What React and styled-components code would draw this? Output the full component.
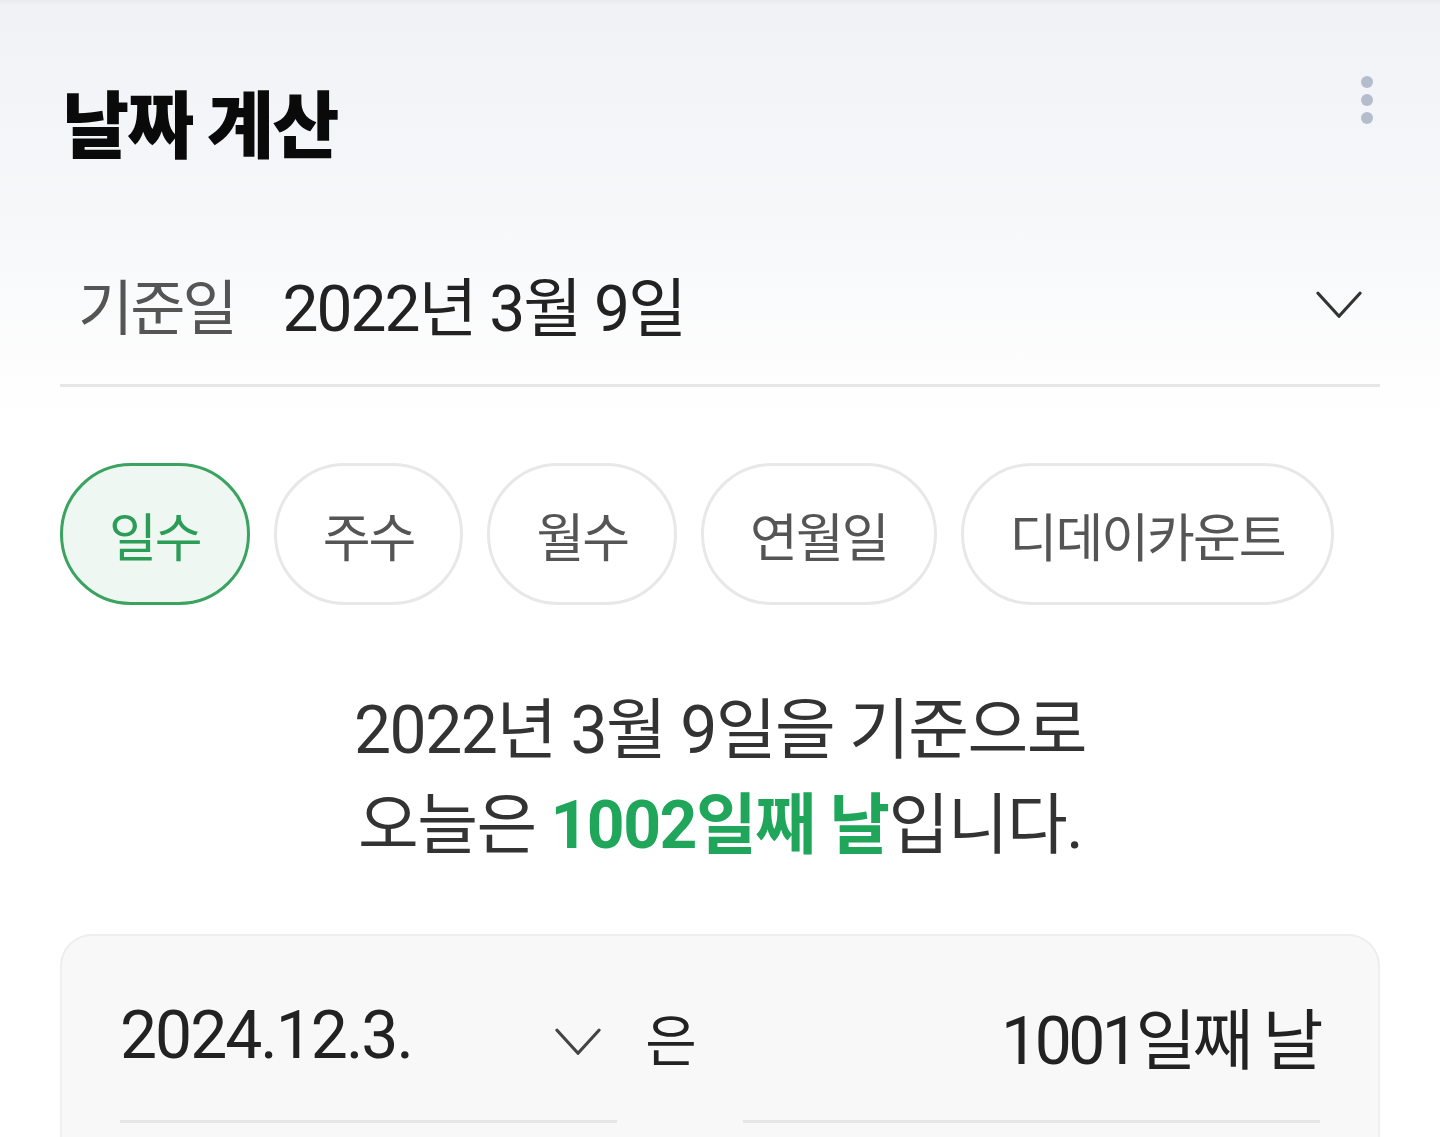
import { createGlobalStyle } from "styled-components";
import styled from "styled-components";

const GlobalStyle = createGlobalStyle`
  html, body {
    margin: 0;
    padding: 0;
  }
  body {
    background: #fff;
    font-family: Roboto, "Noto Sans CJK KR", sans-serif;
    color: #222;
  }
`;

const Page = styled.div`
  width: 1440px;
  height: 1137px;
  overflow: hidden;
  background: linear-gradient(to bottom, #e9eaee 0px, #f1f2f6 6px, #f6f7f9 200px, #ffffff 420px);
`;

const Header = styled.header`
  display: flex;
  justify-content: space-between;
  align-items: flex-start;
  padding: 77px 60px 0 62px;
  height: 150px;
  box-sizing: border-box;
`;

const Title = styled.h1`
  margin: 0;
  font-family: "Noto Sans CJK KR", sans-serif;
  font-size: 73px;
  font-weight: 900;
  letter-spacing: -2px;
  color: #0a0a0a;
  line-height: 1.2;
`;

const MenuButton = styled.div`
  display: flex;
  flex-direction: column;
  gap: 6px;
  margin-top: -1px;
  padding-right: 7px;
  span {
    width: 12px;
    height: 12px;
    border-radius: 50%;
    background: #b5bccb;
  }
`;

const Section = styled.div`
  padding: 0 60px;
`;

const BaseRow = styled.div`
  display: flex;
  align-items: center;
  height: 237px;
  padding: 72px 18px 0 18px;
  border-bottom: 3px solid #e6e6e6;
  box-sizing: border-box;
`;

const BaseLabel = styled.span`
  font-family: "Noto Sans CJK KR", sans-serif;
  font-size: 60px;
  color: #555;
  letter-spacing: -3px;
  margin-right: 48px;
`;

const BaseValue = styled.span`
  font-size: 64px;
  color: #222;
  letter-spacing: -2px;
  flex: 1;
`;

const ChevronWrap = styled.span`
  display: flex;
  margin-top: ${(p) => p.$offset || 0}px;
`;

const Chevron = ({ size = 46, stroke = "#333", offset }) => (
  <ChevronWrap $offset={offset}>
    <svg width={size} height={size * 0.62} viewBox="0 0 46 28" fill="none">
      <path d="M2 2 L23 25 L44 2" stroke={stroke} strokeWidth="3.2" strokeLinecap="round" strokeLinejoin="round" />
    </svg>
  </ChevronWrap>
);

const ChipRow = styled.div`
  display: flex;
  gap: 24px;
  margin-top: 76px;
`;

const Chip = styled.div`
  height: 142px;
  padding: 0 46px;
  border-radius: 71px;
  box-sizing: border-box;
  display: flex;
  align-items: center;
  justify-content: center;
  font-family: "Noto Sans CJK KR", sans-serif;
  font-size: 52px;
  letter-spacing: -2px;
  border: 3px solid ${(p) => (p.$active ? "#39a35f" : "#e8e8e8")};
  background: ${(p) => (p.$active ? "#eef7f1" : "#fff")};
  color: ${(p) => (p.$active ? "#2c9d57" : "#555")};
`;

const Result = styled.div`
  margin-top: 78px;
  text-align: center;
  font-size: 66px;
  line-height: 95px;
  color: #333;
  letter-spacing: -1.5px;
`;

const Highlight = styled.strong`
  color: #1fa65a;
  font-weight: 700;
`;

const Card = styled.div`
  margin-top: 61px;
  background: #f8f8f8;
  border: 2px solid #eeeeee;
  border-bottom: none;
  border-radius: 32px 32px 0 0;
  height: 220px;
  padding: 48px 58px 0 58px;
  box-sizing: border-box;
  display: flex;
  align-items: flex-start;
`;

const Field = styled.div`
  display: flex;
  align-items: center;
  justify-content: ${(p) => (p.$right ? "flex-end" : "space-between")};
  width: ${(p) => p.$width}px;
  height: 139px;
  border-bottom: 3px solid #e6e6e6;
  box-sizing: border-box;
  padding: 0 ${(p) => (p.$right ? 0 : 16)}px 34px 0;
  font-size: 66px;
  color: #222;
  letter-spacing: ${(p) => (p.$right ? -3.5 : -2)}px;
`;

const Particle = styled.span`
  display: flex;
  align-items: center;
  justify-content: center;
  width: 126px;
  height: 139px;
  padding: 0 18px 34px 0;
  box-sizing: border-box;
  font-family: "Noto Sans CJK KR", sans-serif;
  font-size: 56px;
  color: #222;
`;

const chips = [
  { label: "일수", active: true },
  { label: "주수" },
  { label: "월수" },
  { label: "연월일" },
  { label: "디데이카운트" },
];

export default function App() {
  return (
    <>
      <GlobalStyle />
      <Page>
        <Header>
          <Title>날짜 계산</Title>
          <MenuButton>
            <span />
            <span />
            <span />
          </MenuButton>
        </Header>
        <Section>
          <BaseRow>
            <BaseLabel>기준일</BaseLabel>
            <BaseValue>2022년 3월 9일</BaseValue>
            <Chevron offset={4} />
          </BaseRow>
          <ChipRow>
            {chips.map((c) => (
              <Chip key={c.label} $active={c.active}>
                {c.label}
              </Chip>
            ))}
          </ChipRow>
          <Result>
            2022년 3월 9일을 기준으로
            <br />
            오늘은 <Highlight>1002일째 날</Highlight>입니다.
          </Result>
          <Card>
            <Field $width={498}>
              <span>2024.12.3.</span>
              <Chevron size={46} stroke="#444" offset={14} />
            </Field>
            <Particle>은</Particle>
            <Field $width={578} $right>
              <span>1001일째 날</span>
            </Field>
          </Card>
        </Section>
      </Page>
    </>
  );
}
